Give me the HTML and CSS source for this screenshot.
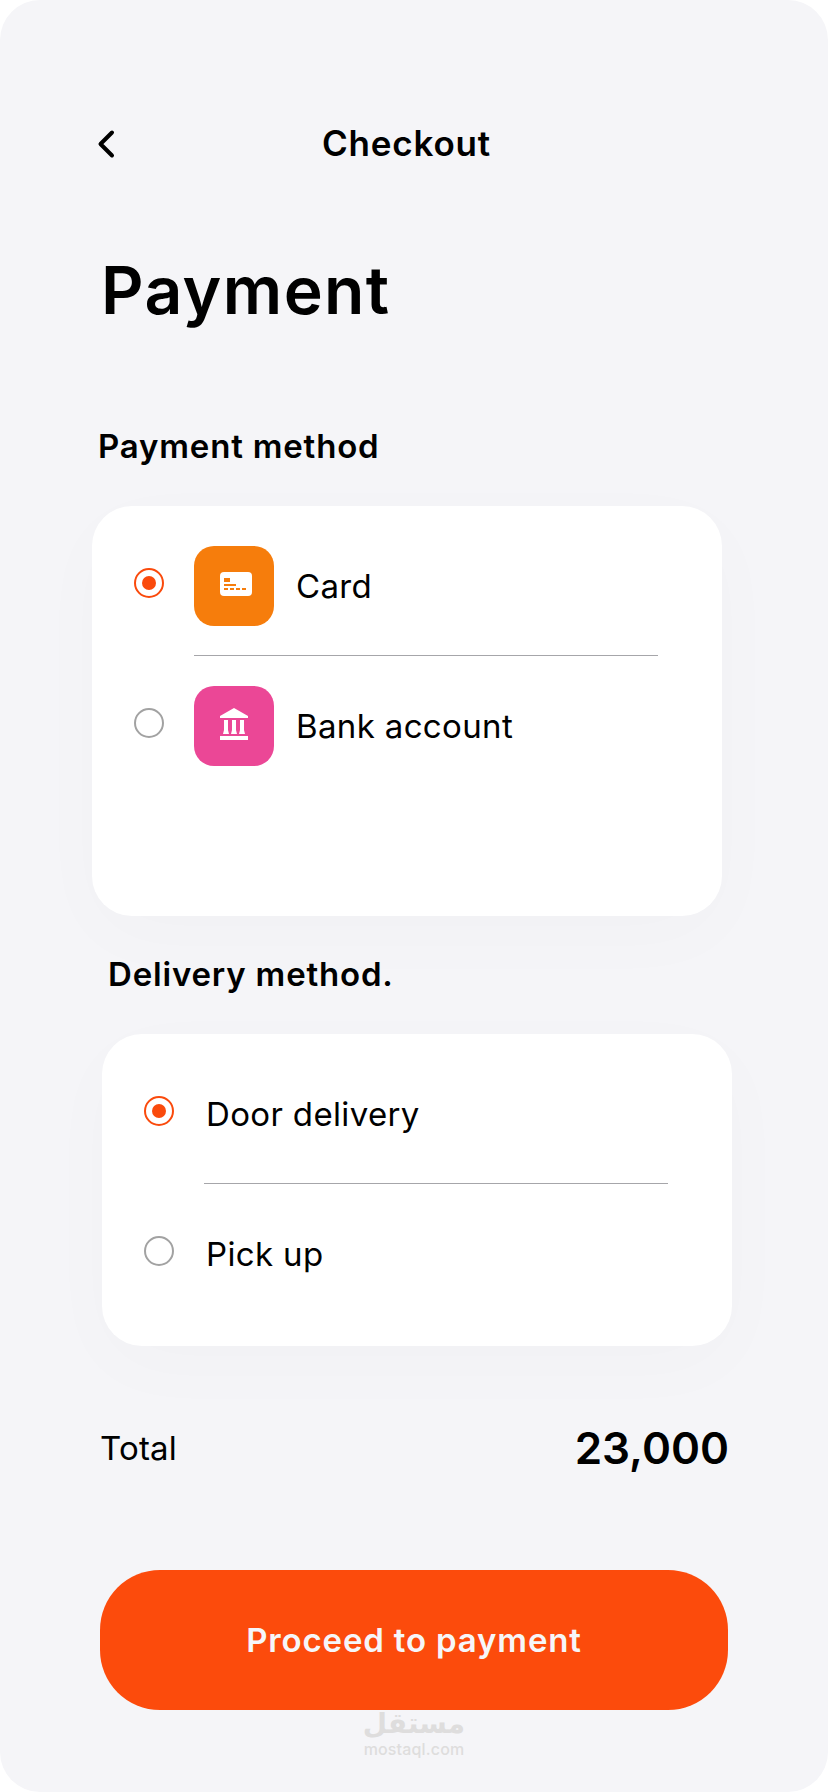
FILE: index.html
```html
<!DOCTYPE html>
<html lang="en">
<head>
<meta charset="utf-8">
<title>Checkout</title>
<link rel="stylesheet" href="styles.css">
</head>
<body>
<main class="screen">
  <header class="topbar">
    <svg class="back" viewBox="0 0 20 30" width="20" height="30"><path d="M16 3.500 4.500 15l11.500 11.500" fill="none" stroke="#000" stroke-width="4" stroke-linecap="round" stroke-linejoin="round"/></svg>
    <span class="topbar-title">Checkout</span>
  </header>
  <h1 class="title">Payment</h1>

  <h2 class="heading heading-payment">Payment method</h2>
  <section class="card card-payment">
    <div class="option">
      <span class="radio radio-on"></span>
      <span class="tile tile-card">
        <svg viewBox="0 0 80 80" width="80" height="80">
          <rect x="26" y="26" width="32" height="24" rx="4" fill="#fff"/>
          <path d="M30 32h6v4h-6zM30 38h12v2h-12zM30 42h4v2h-4zM36 42h4v2h-4zM42 42h4v2h-4zM48 42h4v2h-4z" fill="#f67d0c"/>
        </svg>
      </span>
      <span class="label">Card</span>
    </div>
    <div class="divider"></div>
    <div class="option">
      <span class="radio"></span>
      <span class="tile tile-bank">
        <svg viewBox="0 0 80 80" width="80" height="80">
          <path d="M40 22 54 30v2H26v-2zM30 34h4v10l1 4h-6l1-4zM38 34h4v10l1 4h-6l1-4zM46 34h4v10l1 4h-6l1-4zM26 50h28v4H26z" fill="#fff"/>
        </svg>
      </span>
      <span class="label">Bank account</span>
    </div>
  </section>

  <h2 class="heading heading-delivery">Delivery method.</h2>
  <section class="card card-delivery">
    <div class="option">
      <span class="radio radio-on"></span>
      <span class="label">Door delivery</span>
    </div>
    <div class="divider"></div>
    <div class="option">
      <span class="radio"></span>
      <span class="label">Pick up</span>
    </div>
  </section>

  <div class="total">
    <span class="total-label">Total</span>
    <span class="total-value">23,000</span>
  </div>
  <button class="proceed">Proceed to payment</button>
  <div class="watermark">
    <span class="watermark-logo" lang="ar" dir="rtl">مستقل</span>
    <span class="watermark-site">mostaql.com</span>
  </div>
</main>
</body>
</html>
```
FILE: styles.css
```css
* { box-sizing: border-box; margin: 0; }
body { background: #fff; font-family: Inter, "Liberation Sans", sans-serif; color: #000; }
.screen {
  display: flex;
  flex-direction: column;
  width: 828px;
  height: 1792px;
  padding-top: 121px;
  background: #f5f5f8;
  border-radius: 40px;
  overflow: hidden;
}
.topbar { display: flex; align-items: center; height: 44px; padding-left: 96px; }
.back { display: block; margin-top: 1px; }
.topbar-title { margin-left: 206px; font-size: 35px; font-weight: 600; line-height: 44px; letter-spacing: 0.8px; }
.title { margin: 85px 0 0 101px; font-size: 66px; font-weight: 600; line-height: 80px; letter-spacing: 1.4px; }
.heading { font-size: 33px; font-weight: 600; line-height: 40px; letter-spacing: 0.82px; }
.heading-payment { margin: 96px 0 0 98px; }
.heading-delivery { margin: 38px 0 0 108px; }
.card {
  width: 630px;
  padding: 40px 42px 0;
  background: #fff;
  border-radius: 40px;
  box-shadow: 0 20px 80px rgba(0, 0, 0, 0.02);
}
.card-payment { height: 410px; margin: 40px 0 0 92px; }
.card-delivery { height: 312px; margin: 40px 0 0 102px; }
.option { display: flex; align-items: center; height: 80px; }
.radio {
  display: flex;
  align-items: center;
  justify-content: center;
  width: 30px;
  height: 30px;
  margin-bottom: 6px;
  border: 2px solid #a2a2a2;
  border-radius: 50%;
}
.radio-on { border-color: #fa4a0c; }
.radio-on::before { content: ""; width: 14px; height: 14px; border-radius: 50%; background: #fa4a0c; }
.tile { width: 80px; height: 80px; margin-left: 30px; border-radius: 20px; }
.tile svg { display: block; }
.tile-card { background: #f67d0c; }
.tile-bank { background: #eb4796; }
.label { margin-left: 22px; font-size: 33px; line-height: 40px; letter-spacing: 0.35px; }
.card-delivery .label { margin-left: 32px; }
.divider { width: 464px; height: 1px; margin: 29px 0 30px 60px; background: #a6a6aa; }
.total { display: flex; align-items: center; justify-content: space-between; height: 54px; margin: 75px 99px 0 100px; }
.total-label { font-size: 33px; line-height: 40px; letter-spacing: 0.2px; }
.total-value { font-size: 44px; font-weight: 600; line-height: 54px; }
.proceed {
  flex: none;
  width: 628px;
  height: 140px;
  margin: 95px 0 0 100px;
  border: 0;
  border-radius: 60px;
  background: #fc4b0c;
  color: #f6f6f9;
  font: 600 33px/40px Inter, "Liberation Sans", sans-serif;
  letter-spacing: 0.84px;
}
.watermark { display: flex; flex-direction: column; align-items: center; width: 828px; color: #dedddd; }
.watermark-logo { height: 33px; margin-top: -3px; font: bold 28px/34px "DejaVu Sans", sans-serif; }
.watermark-site { font: 500 16px/18px Inter, "Liberation Sans", sans-serif; letter-spacing: 0.15px; }
```
